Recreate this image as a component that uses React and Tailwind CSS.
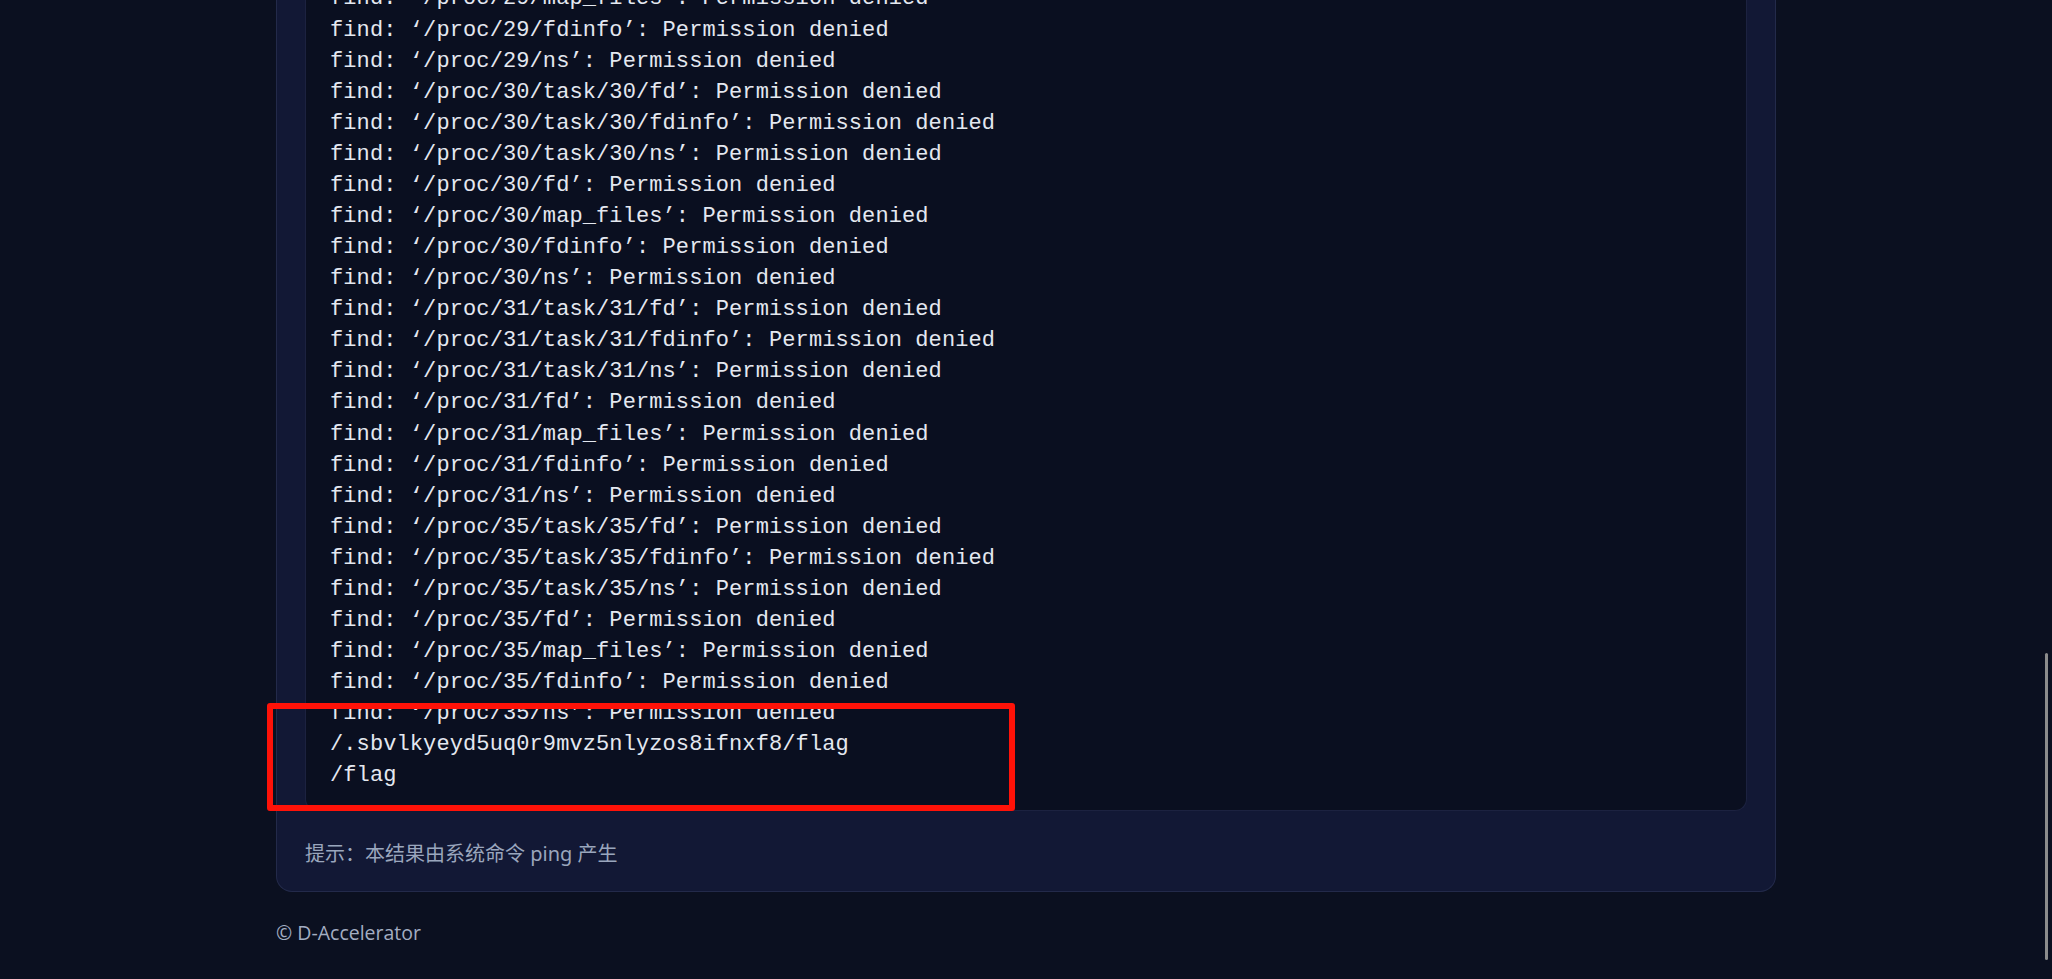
import React from "react";

const lines = [
  "find: ‘/proc/29/task/29/fd’: Permission denied",
  "find: ‘/proc/29/task/29/fdinfo’: Permission denied",
  "find: ‘/proc/29/task/29/ns’: Permission denied",
  "find: ‘/proc/29/fd’: Permission denied",
  "find: ‘/proc/29/map_files’: Permission denied",
  "find: ‘/proc/29/fdinfo’: Permission denied",
  "find: ‘/proc/29/ns’: Permission denied",
];
for (const n of [30, 31, 35]) {
  lines.push(`find: ‘/proc/${n}/task/${n}/fd’: Permission denied`);
  lines.push(`find: ‘/proc/${n}/task/${n}/fdinfo’: Permission denied`);
  lines.push(`find: ‘/proc/${n}/task/${n}/ns’: Permission denied`);
  lines.push(`find: ‘/proc/${n}/fd’: Permission denied`);
  lines.push(`find: ‘/proc/${n}/map_files’: Permission denied`);
  lines.push(`find: ‘/proc/${n}/fdinfo’: Permission denied`);
  lines.push(`find: ‘/proc/${n}/ns’: Permission denied`);
}
lines.push("/.sbvlkyeyd5uq0r9mvz5nlyzos8ifnxf8/flag");
lines.push("/flag");

export default function App() {
  return (
    <div className="relative h-[979px] w-full overflow-hidden bg-[#0b1020] flex flex-col justify-end">
      <div className="w-[1500px] mx-auto shrink-0">
        <div className="rounded-b-[16px] border-x border-b border-[#232a4a] bg-[#121835] px-[28px] pb-[22px]">
          <div className="rounded-b-[12px] border-x border-b border-[#1c2240] bg-[#0a0f20] px-[24px] pb-[18.5px]">
            <div
              className="whitespace-pre text-[22px] leading-[31.08px] tracking-[0.1px] text-[#e4e8f0]"
              style={{ fontFamily: '"Liberation Mono", monospace' }}
            >
              {lines.map((l, i) => (
                <div key={i}>{l}</div>
              ))}
            </div>
          </div>
          <div
            className="mt-[28px] text-[20px] leading-[30px] text-[#9aa6bd]"
            style={{ fontFamily: '"Noto Sans", "Noto Sans CJK SC", sans-serif' }}
          >
            提示：本结果由系统命令 ping 产生
          </div>
        </div>
        <div
          className="mt-[27px] mb-[32px] text-[19.5px] leading-[28px] text-[#a3adc2]"
          style={{ fontFamily: '"Open Sans", "Noto Sans", sans-serif' }}
        >
          © D-Accelerator
        </div>
      </div>
      <div className="absolute left-[267px] top-[703px] h-[108px] w-[748px] rounded-[3px] border-[6px] border-[#ff1208]" />
      <div className="absolute left-[2045px] top-[653px] h-[307px] w-[3px] rounded-full bg-[#8c8c8c]" />
    </div>
  );
}
